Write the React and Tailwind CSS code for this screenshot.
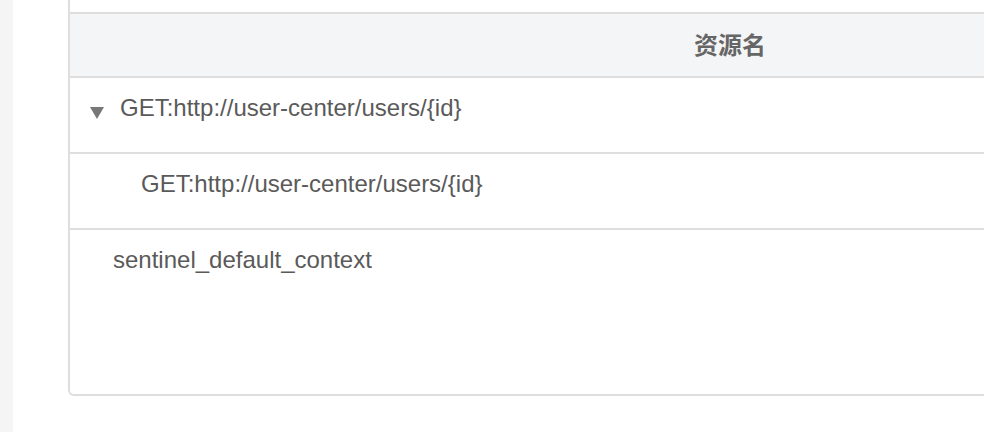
import React from 'react'

const rows = [
  { name: "GET:http://user-center/users/{id}", level: 0, open: true },
  { name: "GET:http://user-center/users/{id}", level: 1 },
  { name: "sentinel_default_context", level: -1 },
]

const Caret = () => (
  <svg width="14" height="12" viewBox="0 0 14 12" className="shrink-0 mt-[13px]">
    <polygon points="0,0 14,0 7,12" fill="#777777" />
  </svg>
)

const App = () => {
  return (
    <div className="flex h-[432px] w-[984px] overflow-hidden bg-white" style={{ fontFamily: '"Liberation Sans", "Noto Sans CJK SC", sans-serif' }}>
      <div className="w-[13px] shrink-0 bg-[#f5f5f5]"></div>
      <div className="ml-[55px] shrink-0">
        <div className="w-[1324px] h-[396px] border-2 border-t-0 border-[#dedede] rounded-b-md pt-[12px]">
          <div className="h-[66px] border-y-2 border-[#dedede] bg-[#f4f5f7] flex items-center justify-center">
            <span className="text-[24px] leading-[28px] font-bold text-[#666666] pt-[2px]">资源名</span>
          </div>
          {rows.map((row, i) => (
            <div
              key={i}
              className={
                i < rows.length - 1
                  ? "h-[76px] border-b-2 border-[#dedede] pt-[16px]"
                  : "pt-[16px]"
              }
            >
              {row.level === 0 && (
                <div className="flex pl-[20px] gap-[16px]">
                  <Caret />
                  <span className="text-[24px] leading-[28px] text-[#5a5a5a]">{row.name}</span>
                </div>
              )}
              {row.level === 1 && (
                <div className="pl-[71px] text-[24px] leading-[28px] text-[#5a5a5a]">{row.name}</div>
              )}
              {row.level === -1 && (
                <div className="pl-[43px] text-[24px] leading-[28px] text-[#5a5a5a]">{row.name}</div>
              )}
            </div>
          ))}
        </div>
      </div>
    </div>
  )
}

export default App
